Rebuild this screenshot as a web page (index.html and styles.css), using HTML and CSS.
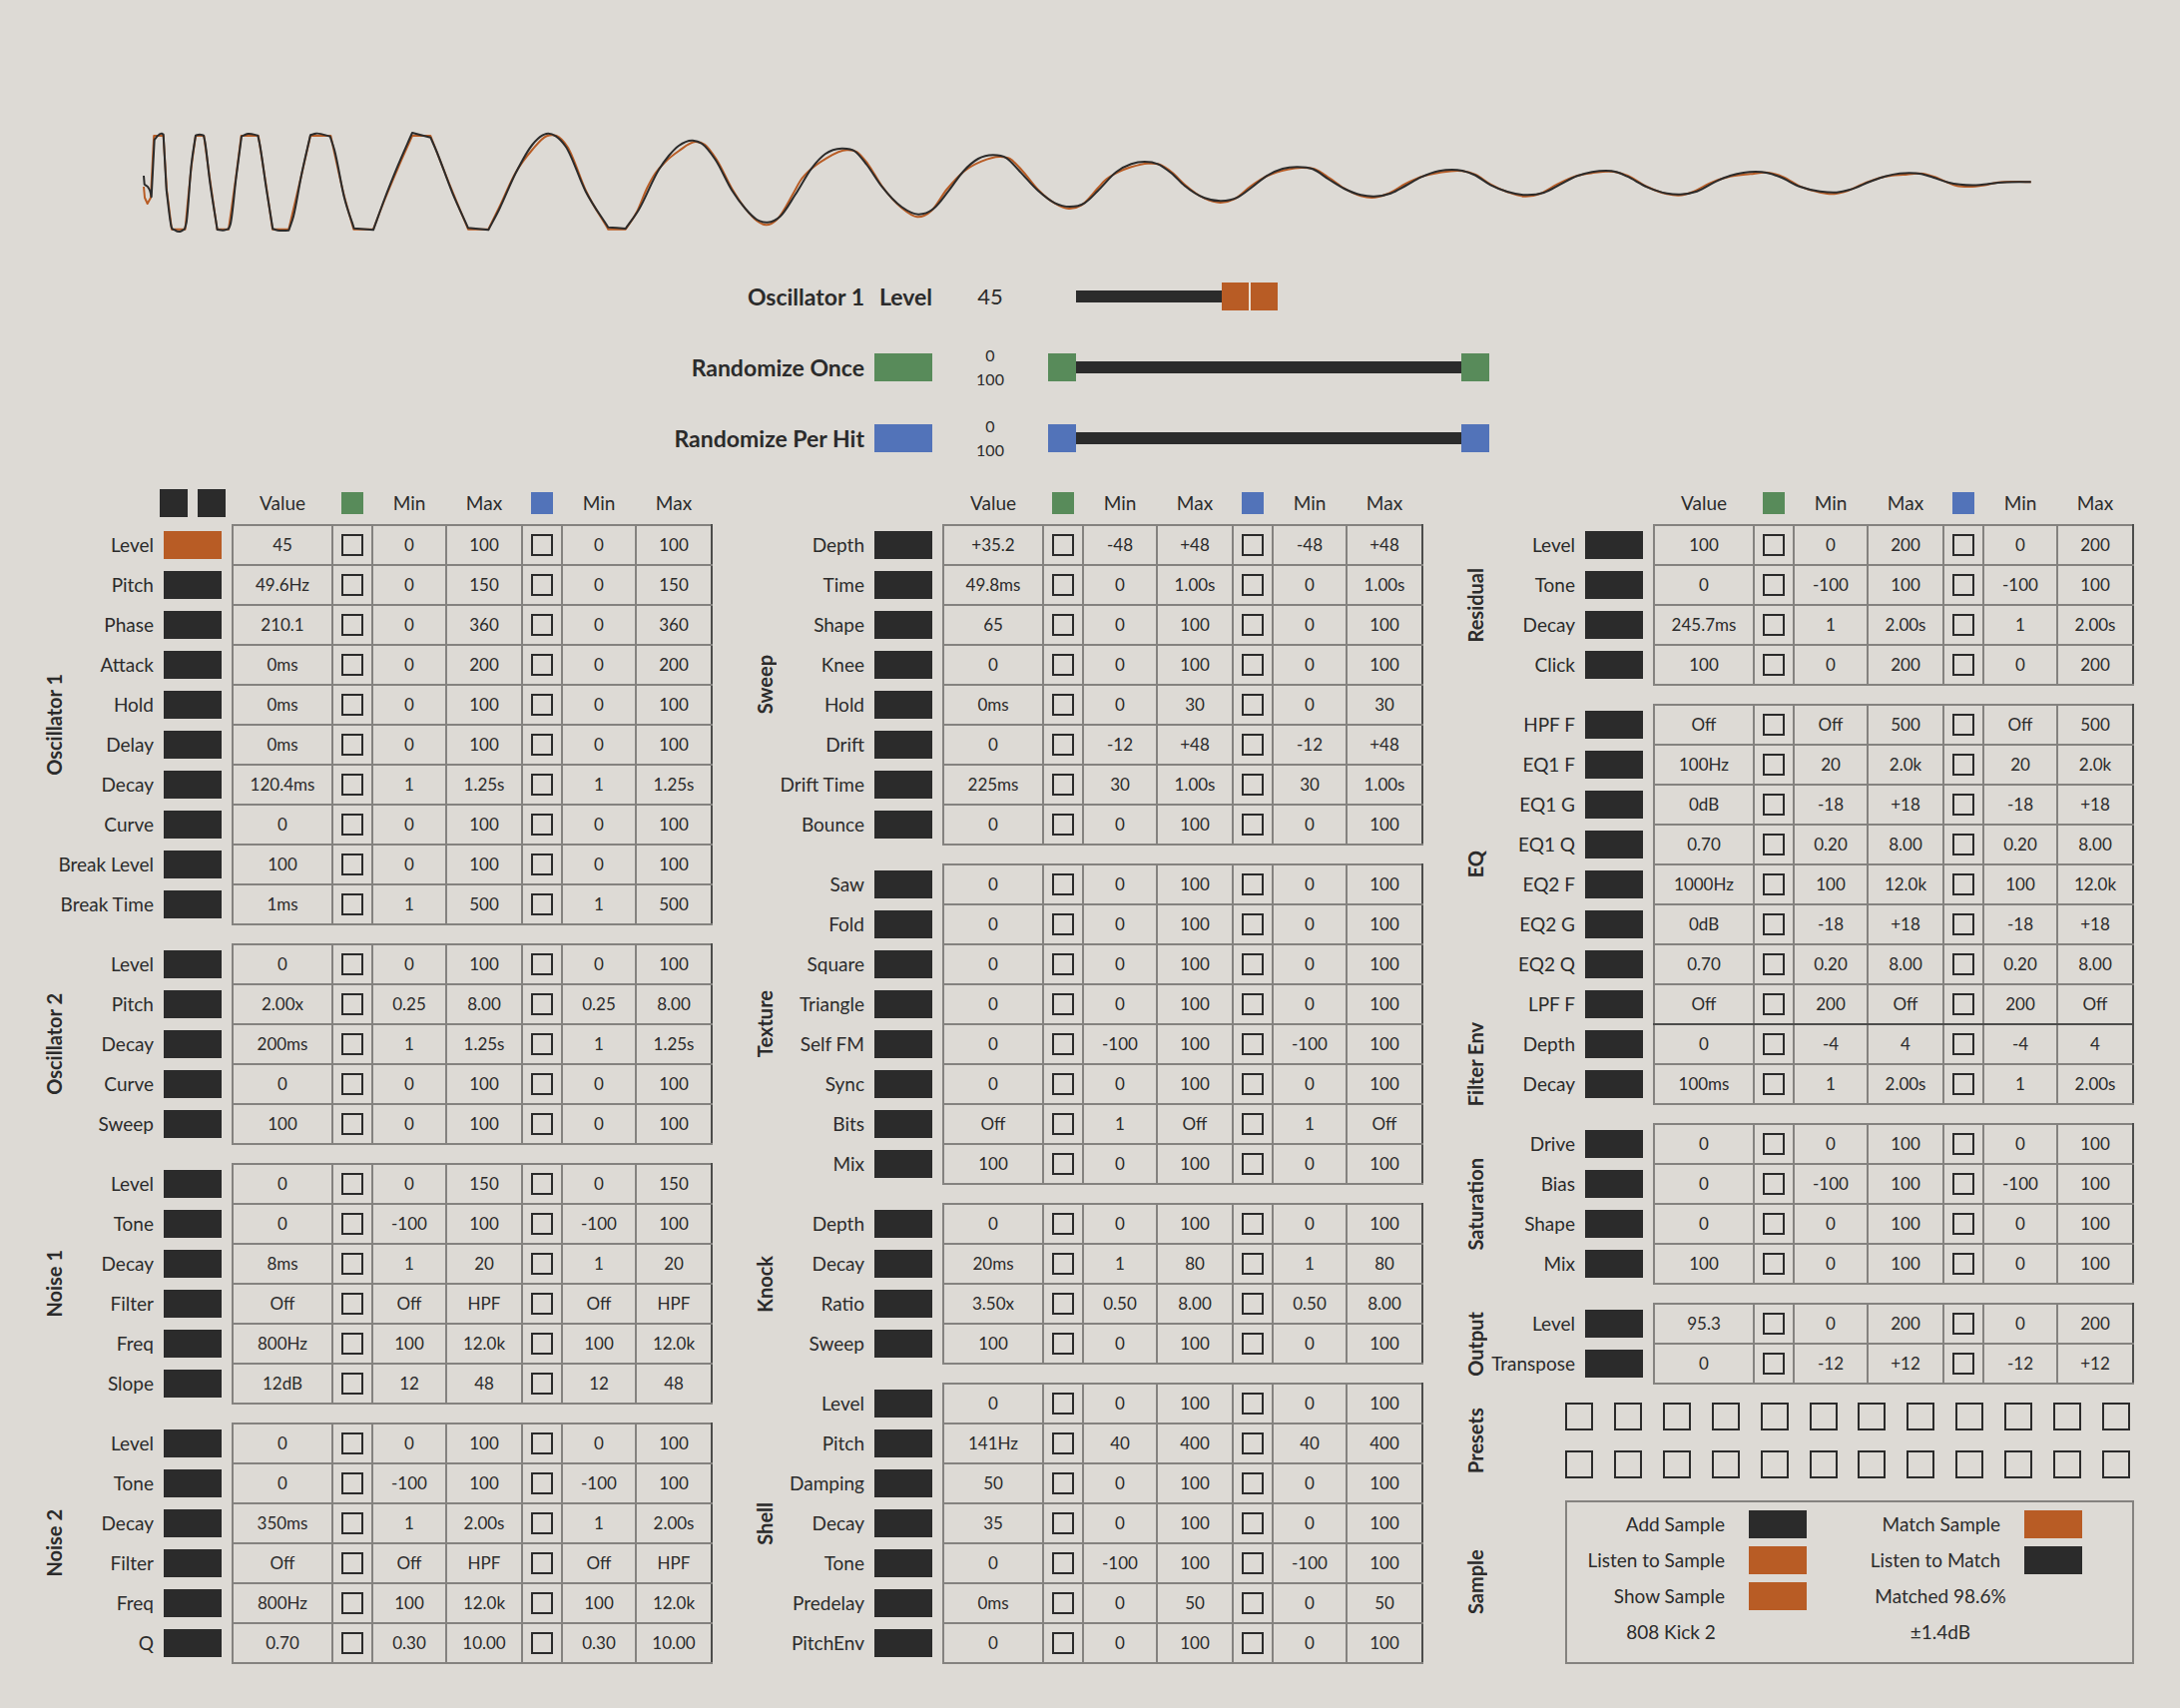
FILE: index.html
```html
<!DOCTYPE html>
<html lang="en">
<head>
  <meta charset="UTF-8" />
  <meta name="viewport" content="width=device-width, initial-scale=1.0"/>
  <title>Kick Synth</title>
  <link rel="stylesheet" href="styles.css">
</head>
<body>

  <!-- Waveform -->
  <svg id="wave" class="wave" viewBox="144 130 1891 110" preserveAspectRatio="none" role="img" aria-label="Waveform"></svg>

  <!-- Selected parameter -->
  <section class="controls">
    <label class="control-name" for="level">Oscillator 1</label>
    <span class="control-param">Level</span>
    <output class="control-value" for="level">45</output>
    <div class="slider single">
      <input type="range" id="level" min="0" max="100" value="45">
    </div>

    <label class="control-name" for="once">Randomize Once</label>
    <button type="button" id="once" class="key green"></button>
    <div class="control-range"><span>0</span><span>100</span></div>
    <div class="slider double green">
      <input type="range" min="0" max="100" value="0" aria-label="Randomize once minimum">
      <input type="range" min="0" max="100" value="100" aria-label="Randomize once maximum">
    </div>

    <label class="control-name" for="perhit">Randomize Per Hit</label>
    <button type="button" id="perhit" class="key blue"></button>
    <div class="control-range"><span>0</span><span>100</span></div>
    <div class="slider double blue">
      <input type="range" min="0" max="100" value="0" aria-label="Randomize per hit minimum">
      <input type="range" min="0" max="100" value="100" aria-label="Randomize per hit maximum">
    </div>
  </section>

  <!-- Parameter tables -->
  <main>
    <div class="column"><table id="params1"></table></div>
    <div class="column"><table id="params2"></table></div>
    <div class="column">
      <table id="params3"></table>

      <section class="panel presets">
        <h2 class="title">Presets</h2>
        <div id="presets" class="preset-grid"></div>
      </section>

      <section class="panel sample">
        <h2 class="title">Sample</h2>
        <div class="sample-box">
          <label for="add">Add Sample</label>
          <button type="button" id="add" class="key"></button>
          <label for="match">Match Sample</label>
          <button type="button" id="match" class="key orange"></button>

          <label for="listen">Listen to Sample</label>
          <button type="button" id="listen" class="key orange"></button>
          <label for="listenmatch">Listen to Match</label>
          <button type="button" id="listenmatch" class="key"></button>

          <label for="show">Show Sample</label>
          <button type="button" id="show" class="key orange"></button>
          <span class="note right">Matched 98.6%</span>

          <span class="note">808 Kick 2</span>
          <span class="note right">±1.4dB</span>
        </div>
      </section>
    </div>
  </main>

  <script src="script.js"></script>
</body>
</html>
```
FILE: styles.css
```css
* {
  box-sizing: border-box;
}

body {
  margin: 0;
  padding: 130px 46px 44px;
  background: #dddad5;
  color: #2b2b2b;
  font-family: Lato, sans-serif;
  font-size: 19px;
  line-height: 24px;
}

/* Waveform */
.wave {
  display: block;
  width: calc(100% - 201px);
  height: 110px;
  margin-left: 98px;
  overflow: visible;
}

.wave path {
  fill: none;
  stroke: #2b2b2b;
  stroke-width: 2;
  stroke-linejoin: round;
}

.wave .sample-line {
  stroke: #b85c25;
}

/* Controls */
.controls {
  display: grid;
  grid-template-columns: 830fr 58px 116px 442px 646fr;
  grid-auto-rows: 28px;
  row-gap: 43px;
  align-items: center;
  margin-top: 43px;
}

.control-name,
.control-param {
  font-size: 23px;
  font-weight: 700;
  text-align: right;
  white-space: nowrap;
}

.control-name {
  grid-column: 1;
  padding-right: 10px;
}

.control-value {
  font-size: 22px;
  text-align: center;
}

.control-range {
  display: grid;
  font-size: 16px;
  text-align: center;
}

.key {
  display: block;
  width: 58px;
  height: 28px;
  padding: 0;
  border: 0;
  background: #2b2b2b;
  cursor: pointer;
}

.key.orange { background: #b85c25; }
.key.green { background: #588b5a; }
.key.blue { background: #5273b9; }

.slider {
  display: grid;
  height: 28px;
}

.slider.green { --thumb: #588b5a; }
.slider.blue { --thumb: #5273b9; }

.slider::before,
.slider input {
  grid-area: 1 / 1;
}

.slider::before {
  content: "";
  align-self: center;
  height: 12px;
  margin: 0 28px;
  background: #2b2b2b;
}

.slider.single::before {
  width: calc((100% - 56px) * var(--level, 0.45));
}

.slider input {
  width: 100%;
  height: 28px;
  margin: 0;
  appearance: none;
  background: none;
}

.slider.double input {
  pointer-events: none;
}

.slider input::-webkit-slider-thumb {
  width: 28px;
  height: 28px;
  appearance: none;
  background: var(--thumb);
  pointer-events: auto;
}

.slider.single input::-webkit-slider-thumb {
  width: 56px;
  background: linear-gradient(to right, #b85c25 27px, #eadfd4 27px, #eadfd4 29px, #b85c25 29px);
}

/* Parameter tables */
main {
  display: grid;
  grid-template-columns: repeat(3, minmax(0, 1fr));
  gap: 44px;
  margin-top: 33px;
}

table {
  width: 100%;
  table-layout: fixed;
  border-collapse: collapse;
}

.col-title { width: 10px; }
.col-key { width: 69px; }
.col-value { width: 100px; }
.col-check { width: 40px; }
.col-min { width: 74px; }
.col-max { width: 76px; }

tr {
  height: 40px;
}

tr.gap {
  height: 20px;
}

th,
td {
  padding: 0;
  font-weight: 400;
  text-align: center;
  white-space: nowrap;
}

thead th,
thead td {
  padding-bottom: 4px;
}

td.cell {
  border: 2px solid #84827f;
  font-size: 17px;
}

td.cell:last-child {
  border-right-color: #4c4c4b;
}

tbody:has(+ .joined) tr:last-child .cell {
  border-bottom-color: #4c4c4b;
}

th.name {
  padding-right: 10px;
  text-align: right;
}

.title {
  margin: 0;
  font-size: 20px;
  font-weight: 700;
  line-height: 16px;
  text-align: center;
  white-space: nowrap;
  writing-mode: vertical-rl;
  transform: rotate(180deg);
}

/* long titles may run past a short group */
th .title {
  margin: -8px 0;
}

.pages {
  display: flex;
  justify-content: flex-end;
  gap: 10px;
  padding-right: 7px;
}

.pages .key {
  width: 28px;
}

thead .mark {
  width: 22px;
  height: 22px;
  margin: 0 auto;
}

input[type="checkbox"] {
  display: block;
  width: 22px;
  height: 22px;
  margin: 0 auto;
  border: 2px solid #2b2b2b;
  appearance: none;
}

input[type="checkbox"]:checked {
  background: #2b2b2b;
}

/* Presets and sample */
.panel {
  display: grid;
  grid-template-columns: 16px minmax(0, 1fr);
  column-gap: 82px;
}

.presets {
  margin-top: 18px;
}

.preset-grid {
  display: grid;
  grid-template-columns: repeat(12, 28px);
  justify-content: space-between;
  row-gap: 20px;
  padding-right: 4px;
}

.preset {
  width: 28px;
  height: 28px;
  padding: 0;
  border: 2px solid #2b2b2b;
  background: none;
}

.sample {
  margin-top: 22px;
}

.sample-box {
  display: grid;
  grid-template-columns: 158px 58px minmax(0, 1fr) 58px;
  grid-auto-rows: 28px;
  gap: 8px 24px;
  align-items: center;
  padding: 8px 50px 16px 0;
  border: 2px solid #84827f;
}

.sample-box label {
  text-align: right;
  white-space: nowrap;
}

.note {
  grid-column: 1;
  justify-self: center;
  margin-left: 50px;
  white-space: nowrap;
}

.note.right {
  grid-column: 3;
}
```
FILE: script.js
```js
// name, value, min, max
const columns = {
  params1: [
    { title: "Oscillator 1", rows: [
      ["Level", "45", "0", "100"],
      ["Pitch", "49.6Hz", "0", "150"],
      ["Phase", "210.1", "0", "360"],
      ["Attack", "0ms", "0", "200"],
      ["Hold", "0ms", "0", "100"],
      ["Delay", "0ms", "0", "100"],
      ["Decay", "120.4ms", "1", "1.25s"],
      ["Curve", "0", "0", "100"],
      ["Break Level", "100", "0", "100"],
      ["Break Time", "1ms", "1", "500"]
    ]},
    { title: "Oscillator 2", rows: [
      ["Level", "0", "0", "100"],
      ["Pitch", "2.00x", "0.25", "8.00"],
      ["Decay", "200ms", "1", "1.25s"],
      ["Curve", "0", "0", "100"],
      ["Sweep", "100", "0", "100"]
    ]},
    { title: "Noise 1", rows: [
      ["Level", "0", "0", "150"],
      ["Tone", "0", "-100", "100"],
      ["Decay", "8ms", "1", "20"],
      ["Filter", "Off", "Off", "HPF"],
      ["Freq", "800Hz", "100", "12.0k"],
      ["Slope", "12dB", "12", "48"]
    ]},
    { title: "Noise 2", rows: [
      ["Level", "0", "0", "100"],
      ["Tone", "0", "-100", "100"],
      ["Decay", "350ms", "1", "2.00s"],
      ["Filter", "Off", "Off", "HPF"],
      ["Freq", "800Hz", "100", "12.0k"],
      ["Q", "0.70", "0.30", "10.00"]
    ]}
  ],
  params2: [
    { title: "Sweep", rows: [
      ["Depth", "+35.2", "-48", "+48"],
      ["Time", "49.8ms", "0", "1.00s"],
      ["Shape", "65", "0", "100"],
      ["Knee", "0", "0", "100"],
      ["Hold", "0ms", "0", "30"],
      ["Drift", "0", "-12", "+48"],
      ["Drift Time", "225ms", "30", "1.00s"],
      ["Bounce", "0", "0", "100"]
    ]},
    { title: "Texture", rows: [
      ["Saw", "0", "0", "100"],
      ["Fold", "0", "0", "100"],
      ["Square", "0", "0", "100"],
      ["Triangle", "0", "0", "100"],
      ["Self FM", "0", "-100", "100"],
      ["Sync", "0", "0", "100"],
      ["Bits", "Off", "1", "Off"],
      ["Mix", "100", "0", "100"]
    ]},
    { title: "Knock", rows: [
      ["Depth", "0", "0", "100"],
      ["Decay", "20ms", "1", "80"],
      ["Ratio", "3.50x", "0.50", "8.00"],
      ["Sweep", "100", "0", "100"]
    ]},
    { title: "Shell", rows: [
      ["Level", "0", "0", "100"],
      ["Pitch", "141Hz", "40", "400"],
      ["Damping", "50", "0", "100"],
      ["Decay", "35", "0", "100"],
      ["Tone", "0", "-100", "100"],
      ["Predelay", "0ms", "0", "50"],
      ["PitchEnv", "0", "0", "100"]
    ]}
  ],
  params3: [
    { title: "Residual", rows: [
      ["Level", "100", "0", "200"],
      ["Tone", "0", "-100", "100"],
      ["Decay", "245.7ms", "1", "2.00s"],
      ["Click", "100", "0", "200"]
    ]},
    { title: "EQ", rows: [
      ["HPF F", "Off", "Off", "500"],
      ["EQ1 F", "100Hz", "20", "2.0k"],
      ["EQ1 G", "0dB", "-18", "+18"],
      ["EQ1 Q", "0.70", "0.20", "8.00"],
      ["EQ2 F", "1000Hz", "100", "12.0k"],
      ["EQ2 G", "0dB", "-18", "+18"],
      ["EQ2 Q", "0.70", "0.20", "8.00"],
      ["LPF F", "Off", "200", "Off"]
    ]},
    { title: "Filter Env", joined: true, rows: [
      ["Depth", "0", "-4", "4"],
      ["Decay", "100ms", "1", "2.00s"]
    ]},
    { title: "Saturation", rows: [
      ["Drive", "0", "0", "100"],
      ["Bias", "0", "-100", "100"],
      ["Shape", "0", "0", "100"],
      ["Mix", "100", "0", "100"]
    ]},
    { title: "Output", rows: [
      ["Level", "95.3", "0", "200"],
      ["Transpose", "0", "-12", "+12"]
    ]}
  ]
};

function renderTable(id, groups) {
  const pages = id === "params1"
    ? `<div class="pages"><button type="button" class="key" aria-label="Previous"></button><button type="button" class="key" aria-label="Next"></button></div>`
    : "";
  let html = `
    <colgroup>
      <col class="col-title"><col><col class="col-key"><col class="col-value">
      <col class="col-check"><col class="col-min"><col class="col-max">
      <col class="col-check"><col class="col-min"><col class="col-max">
    </colgroup>
    <thead><tr>
      <td colspan="3">${pages}</td>
      <th>Value</th>
      <th><button type="button" class="key mark green" aria-label="Randomize once"></button></th><th>Min</th><th>Max</th>
      <th><button type="button" class="key mark blue" aria-label="Randomize per hit"></button></th><th>Min</th><th>Max</th>
    </tr></thead>`;

  groups.forEach((group, g) => {
    if (g > 0 && !group.joined) {
      html += `<tbody><tr class="gap"><td colspan="10"></td></tr></tbody>`;
    }
    html += `<tbody class="${group.joined ? "joined" : ""}">`;
    group.rows.forEach(([name, value, min, max], r) => {
      const key = `${id}-${g}-${r}`;
      const active = group.title === "Oscillator 1" && name === "Level";
      const range = `<td class="cell">${min}</td><td class="cell">${max}</td>`;
      html += `
        <tr>
          ${r === 0 ? `<th rowspan="${group.rows.length}"><div class="title">${group.title}</div></th>` : ""}
          <th class="name"><label for="${key}">${name}</label></th>
          <td><button type="button" id="${key}" class="key ${active ? "orange" : ""}"></button></td>
          <td class="cell">${value}</td>
          <td class="cell"><input type="checkbox" aria-label="${name} randomize once"></td>${range}
          <td class="cell"><input type="checkbox" aria-label="${name} randomize per hit"></td>${range}
        </tr>`;
    });
    html += `</tbody>`;
  });
  document.getElementById(id).innerHTML = html;
}

Object.keys(columns).forEach(id => renderTable(id, columns[id]));

// Presets
const presets = document.getElementById("presets");
for (let i = 1; i <= 24; i++) {
  presets.innerHTML += `<button type="button" class="preset" aria-label="Preset ${i}"></button>`;
}

// Level slider
const level = document.getElementById("level");
level.addEventListener("input", () => {
  level.parentElement.style.setProperty("--level", level.value / 100);
  document.querySelector(".control-value").textContent = level.value;
});

// Waveforms: x, y pairs
const synthLine = [
  144,176, 144.7,184.7, 148,187, 150.7,192.7, 151.7,197.3, 154.7,140, 157.3,136.7, 162,133.7, 163.7,134.7,
  166.7,190, 171.7,227.3, 175,230.3, 180.3,232, 185,229.3, 186.7,223, 191.7,165, 196,135.7, 200,134.7, 204,135.7,
  205.3,141.7, 210,180, 217.7,230, 223.3,230.7, 229,229.3, 231,224, 236.7,176.7, 242,136.7, 248.3,134, 258.3,135.7,
  260,143.3, 266.7,188.3, 273.3,229.3, 280,231, 289.3,230.7, 294,216.7, 301.7,176.7, 311,135.3, 316.7,133.7,
  330.7,136.7, 335,150, 345,198.3, 354.7,228.7, 374,230.3, 385,200, 398.3,166.7, 413,133, 431.3,137.7, 436.7,150,
  453.3,193.3, 469,228.3, 489.3,230.3, 500,210, 516.7,173.3, 533.3,145, 543.3,135.7, 547.3,134, 556.7,136.3,
  566.7,146.7, 586.7,191.7, 609.3,227.7, 626.7,229, 640,210, 660,170, 670,156, 680,146, 694,140.7, 703.3,144,
  716.7,160, 733.3,190.7, 746.7,209, 758.3,220, 769,222.7, 781.7,216.7, 796.7,195, 813.3,168.3, 826.7,154.3,
  843.3,148.7, 856.7,151.7, 868.3,165, 883.3,186.7, 903.3,207.3, 920,214.7, 935,209.3, 950,191.7, 965,171.7,
  980,159, 995,155.3, 1008.3,158.3, 1021.7,171.7, 1040,191, 1056.7,203.3, 1071.7,207, 1086.7,203.3, 1100,191,
  1118.3,172.3, 1133.3,164.3, 1146.7,162, 1160,164.3, 1173.3,173.3, 1186.7,186, 1206.7,198.3, 1223.3,201.3,
  1240,197.7, 1253.3,188.3, 1270,175.7, 1285,169, 1300,167.3, 1315,169.3, 1331.7,180, 1346.7,189, 1363.3,195.3,
  1376.7,196.7, 1393.3,193.7, 1408.3,186, 1423.3,177.7, 1441.7,171.3, 1465,171, 1476.7,175, 1493.3,185.3,
  1510,192, 1528.3,195.3, 1546.7,193, 1563.3,184.7, 1580,176.3, 1595,172.3, 1619.3,172.3, 1630,176.7, 1650,187.3,
  1670,193.7, 1683.3,194.7, 1700,191.7, 1720,181.3, 1733.3,176, 1746.7,173, 1770.7,173.3, 1783.3,177.3,
  1803.3,187, 1823.3,191.7, 1840,192.7, 1853.3,190, 1873.3,182, 1888.3,176.7, 1903.3,173.7, 1925,174.3,
  1936.7,177.7, 1951.7,182.7, 1983.3,185.3, 2001.7,183, 2034.7,182.3
];

const sampleLine = [
  144,187, 145,198, 147.7,204, 151,198, 154.2,136, 163.7,136, 167,190, 172,229.7, 185.5,229.7, 192,165, 196,136,
  204.3,136, 210.3,180, 217.5,229.7, 229,229.7, 236.5,176.7, 241.7,136, 258.8,136, 267,188.3, 273,229.7,
  289.3,229.7, 301.7,176.7, 311,136, 331.3,136, 345,197, 354.3,229.7, 374,229.7, 385,201, 398.8,168, 413,136,
  431.3,136, 453.3,192, 469,229.7, 489.3,229.7, 500,208, 516.7,172.7, 533.3,150, 547.7,136.3, 557.3,136,
  568.3,146.7, 587.3,191.7, 609.3,229.7, 626.7,229.7, 638.3,211.7, 648.3,188.3, 656.7,173.3, 666.7,162,
  680,151.3, 696.7,142, 706,144.7, 718,160, 733.3,189, 746.7,209, 758.3,221.3, 767.7,225.3, 778.3,220,
  795,193.3, 801.7,181.3, 813.3,168.7, 826.7,159.3, 848.3,150.3, 858.3,152, 869.3,164, 883.3,186, 903.3,208.3,
  919,217.3, 933.3,211, 948.3,190, 966.7,171, 983.3,161.7, 1001.7,157, 1011.7,159, 1023.3,170, 1040,190,
  1056.7,203.7, 1070.7,209, 1083.3,205.7, 1100,188.3, 1106.7,181, 1118.3,173.3, 1133.3,167.3, 1150,163.7,
  1161.7,164.7, 1174.3,172.7, 1186.7,184.7, 1206.7,198.7, 1222.7,203, 1236.7,199.3, 1253.3,186.3, 1270,176,
  1290,169.7, 1303.3,168, 1316.7,169.3, 1332.3,178.7, 1346.7,188.7, 1363.3,196.3, 1374.3,198, 1390,194.3,
  1408.3,184, 1423.3,177.3, 1441.7,173, 1465,171.3, 1478.3,175, 1493.3,184.7, 1510,192.3, 1526.7,196.7,
  1543.3,194, 1560,184.7, 1580,176, 1595,173.3, 1616.7,172, 1630.7,176, 1650,187, 1670,194.3, 1681.7,195.7,
  1696.7,192, 1713.3,183.3, 1733.3,176.7, 1753.3,174.3, 1771.7,173, 1786.7,177.3, 1803.3,186.7, 1823.3,192.7,
  1835,194.3, 1848.3,192, 1870,182.7, 1888.3,177, 1906.7,175, 1926.7,174, 1938.3,177.3, 1951.7,183, 1960,186,
  1973.3,187, 1986.7,185.7, 2001.7,182.7, 2034.7,182.3
];

// Smooth cubic through the points, with a hard corner where the signal clips
function linePath(data) {
  const pts = [];
  for (let i = 0; i < data.length; i += 2) pts.push([data[i], data[i + 1]]);
  const n = pts.length;
  const width = i => pts[i + 1][0] - pts[i][0];
  const slope = i => (pts[i + 1][1] - pts[i][1]) / width(i);
  const tangents = i => {
    if (i === 0) return [slope(0), slope(0)];
    if (i === n - 1) return [slope(n - 2), slope(n - 2)];
    const a = slope(i - 1), b = slope(i);
    const turn = Math.abs(a - b);
    const flat = Math.min(Math.abs(a), Math.abs(b)) < 0.7;
    if (turn > 8 || (turn > 1.3 && (flat || a * b < 0))) return [a, b];
    const t = (a * width(i) + b * width(i - 1)) / (width(i - 1) + width(i));
    return [t, t];
  };
  let d = `M${pts[0]}`;
  for (let i = 0; i < n - 1; i++) {
    const [x0, y0] = pts[i], [x1, y1] = pts[i + 1];
    const h = (x1 - x0) / 3;
    d += `C${x0 + h},${y0 + h * tangents(i)[1]} ${x1 - h},${y1 - h * tangents(i + 1)[0]} ${x1},${y1}`;
  }
  return d;
}

document.getElementById("wave").innerHTML =
  `<path class="sample-line" d="${linePath(sampleLine)}"/><path d="${linePath(synthLine)}"/>`;
```
